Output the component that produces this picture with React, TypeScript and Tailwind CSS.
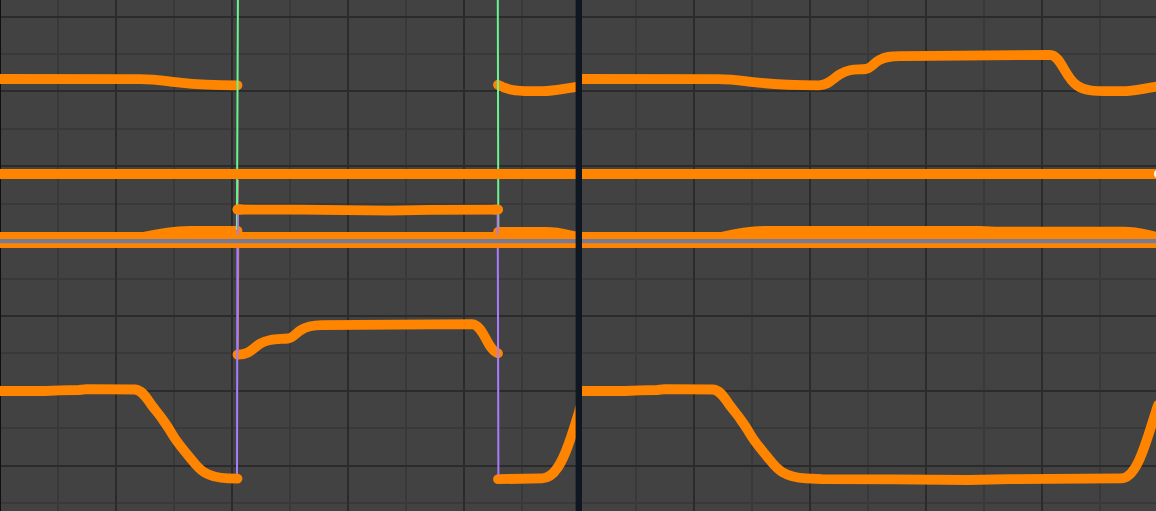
const MAJOR_Y = [17, 91, 166, 241, 316, 391, 466];
const MINOR_Y = [54, 129, 204, 279, 353, 428, 503];

function Grid({ x, width, major, minor }: { x: number; width: number; major: number[]; minor: number[] }) {
  const horizontal = (ys: number[]) => ys.map((y) => `M${x} ${y}h${width}`).join("");
  const vertical = (xs: number[]) => xs.map((v) => `M${v} 0V511`).join("");
  return (
    <g fill="none" strokeWidth={2}>
      <path d={horizontal(MINOR_Y) + vertical(minor)} stroke="#393939" />
      <path d={horizontal(MAJOR_Y) + vertical(major)} stroke="#2b2b2b" />
    </g>
  );
}

function Curves({ paths }: { paths: string[] }) {
  return (
    <g fill="none" stroke="#ff8500" strokeWidth={9.8} strokeLinecap="round" strokeLinejoin="round">
      {paths.map((d) => (
        <path key={d} d={d} />
      ))}
    </g>
  );
}

function Baseline({ x, width }: { x: number; width: number }) {
  return (
    <g>
      <rect x={x} y={169} width={width} height={10} fill="#ff8500" />
      <rect x={x} y={232} width={width} height={16} fill="#ff8500" />
      <rect x={x} y={239} width={width} height={4.2} fill="#757b94" />
    </g>
  );
}

const BEFORE = [
  "M-6 79L140 79.2C156 79.2 168 81.5 180 82.6C200 84.8 210 85.2 237.5 85.3",
  "M498 84.8C507 89.5 514 91.1 530 91.1H543C555 91 563 88.5 582 86.2",
  "M237.5 209.5L300 209.7L390 210.6L430 209.8L498 209.6",
  "M143 237C160 233 172 231 190 230.8H237.5",
  "M498 232H546C560 232 566 234.5 578 237",
  "M237.5 354.7C249 355.2 253 348 260 343.8C269 338.3 278 339.5 288 338.5C293 338 296 333 301 330C307 326.2 312 325.3 322 325.2L472 324.2C484 325 487 350 498 353.3",
  "M-6 391L45 391L60 390.3L79 390L87 389.2L135 389.5C143 390.3 147 399 151.7 405.3C156 411 159 414 163 420C167 425.5 170 430 173.3 436C178 443.5 186 453 191.7 459.8C199 469 206 478 228 478.3L237.5 478.6",
  "M498 479.2L542 478.3C555 478.5 563 460 569 443C574 429 578 415 582 402",
];

const AFTER = [
  "M576 79L718 79.2C734 79.2 746 81.5 758 82.6C778 84.8 788 85.2 819 85.3C829 85 832 79 840 74.3C850 68.3 856 70 866 69C871 68.2 874 63 879 60.3C885 56.7 890 56.1 900 56.1L1050 54.8C1061 55 1065 78 1077 85.5C1084 90.5 1093 91.2 1110 91.2H1122C1136 91.2 1144 88 1161 86.2",
  "M721 237C738 233 752 230.9 768 230.8H980L995 231.7H1124C1140 231.8 1145 235 1158 237",
  "M576 391L625 391L640 390.3L657 390L665 389.2L713 389.5C721 390.3 725 399 729.7 405.3C734 411 737 414 741 420C745 425.5 748 430 751.3 436C756 443.5 764 453 769.7 459.8C777 469 784 477.5 806 478.4L822 479.2L895 479.3L968 480L1010 479.2L1121 478.4C1138 478.4 1147 438 1158 405",
];

function BeforeGraph() {
  return (
    <svg viewBox="0 0 576 511" className="block h-auto w-full" role="img" aria-label="Rotation curves with jumps">
      <Grid x={0} width={576} major={[116, 232, 348, 464]} minor={[58, 174, 290, 406, 522]} />
      <path d="M.5 0V511" stroke="#101010" />
      <Curves paths={BEFORE} />
      <g fill="none" strokeWidth={2}>
        <path d="M238 180L237.2 234M238.2 248L237.8 353" stroke="#c2797d" />
        <path d="M237.9 0L236.9 230M497.8 0L498.3 228" stroke="#68f590" />
        <path d="M237.4 248L237 474M497.8 248L498.4 475" stroke="#a97cff" />
      </g>
      <Baseline x={0} width={576} />
      <path d="M237.5 209.5H241M498 209.6H494" stroke="#ff8500" strokeWidth={9.8} strokeLinecap="round" />
      <path d="M237.9 214V235M497.7 214V235" stroke="#b37bd8" strokeWidth={2} />
      <path d="M575.75 0V511" stroke="#0f1722" strokeWidth={0.5} />
    </svg>
  );
}

function AfterGraph() {
  return (
    <svg viewBox="582 0 574 511" className="block h-auto w-full" role="img" aria-label="Continuous rotation curves">
      <Grid x={582} width={574} major={[694, 810, 926, 1042]} minor={[636, 752, 868, 984, 1100]} />
      <Curves paths={AFTER} />
      <Baseline x={582} width={574} />
      <circle cx={1158} cy={174} r={4} fill="#fff" />
    </svg>
  );
}

export default function App() {
  return (
    <main className="grid grid-cols-[576fr_6px_574fr] overflow-hidden bg-[#424242]">
      <BeforeGraph />
      <div className="bg-[#0f1722]" />
      <AfterGraph />
    </main>
  );
}
